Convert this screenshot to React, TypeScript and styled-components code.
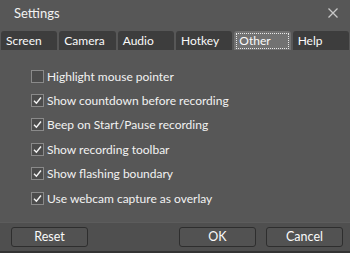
import styled, { createGlobalStyle, css } from 'styled-components';

const Global = createGlobalStyle`
  html, body { margin: 0; padding: 0; background: #575757; }
  body { font-family: Lato, "Open Sans", sans-serif; }
`;

const Window = styled.div`
  width: 350px;
  height: 253px;
  background: #575757;
  display: flex;
  flex-direction: column;
  color: #f2f2f2;
  overflow: hidden;
`;

const TitleBar = styled.div`
  height: 31px;
  display: flex;
  align-items: center;
  justify-content: space-between;
  padding: 0 11px 6px 14px;
  box-sizing: border-box;
  font-size: 13px;
`;

const Close = styled.span`
  display: flex;
  width: 12px;
  height: 12px;
  color: #c8c8c8;
`;

const TabStrip = styled.div`
  display: flex;
  gap: 2px;
  padding: 0 1px;
  height: 19px;
`;

const Tab = styled.div<{ $active?: boolean }>`
  flex: 1;
  position: relative;
  background: ${({ $active }) => ($active ? '#727272' : '#3d3d3d')};
  border-radius: 3px 3px 0 0;
  font-size: 12px;
  line-height: 19px;
  padding-left: 5px;
  color: #fafafa;
  ${({ $active }) =>
    $active &&
    css`
      &::after {
        content: '';
        position: absolute;
        inset: 2px 2px 1px 2px;
        border: 1px dotted #e8e8e8;
      }
    `}
`;

const Content = styled.div`
  flex: 1;
  padding: 14px 0 0 31px;
  display: flex;
  flex-direction: column;
`;

const Row = styled.label`
  height: 24.4px;
  display: flex;
  align-items: center;
  gap: 3px;
  font-size: 12px;
`;

const Box = styled.span`
  width: 11px;
  height: 11px;
  border: 1px solid #8a8a8a;
  background: #4c4c4c;
  display: flex;
  align-items: center;
  justify-content: center;
`;

const Footer = styled.div`
  height: 31px;
  background: #4f4f4f;
  border-top: 1px solid #5c5c5c;
  border-bottom: 2px solid #333;
  box-sizing: border-box;
  display: flex;
  align-items: center;
  padding: 0 7px 0 11px;
  gap: 10px;
`;

const Button = styled.div<{ $push?: boolean }>`
  width: 77px;
  height: 20px;
  box-sizing: border-box;
  border: 1px solid #2e2e2e;
  border-radius: 3px;
  background: #525252;
  font-size: 12.5px;
  text-align: center;
  line-height: 18px;
  color: #fafafa;
  margin-left: ${({ $push }) => ($push ? 'auto' : '0')};
`;

const tabs = ['Screen', 'Camera', 'Audio', 'Hotkey', 'Other', 'Help'];
const options: [string, boolean][] = [
  ['Highlight mouse pointer', false],
  ['Show countdown before recording', true],
  ['Beep on Start/Pause recording', true],
  ['Show recording toolbar', true],
  ['Show flashing boundary', true],
  ['Use webcam capture as overlay', true],
];

export default function App() {
  return (
    <Window>
      <Global />
      <TitleBar>
        <span>Settings</span>
        <Close>
          <svg width="12" height="12" viewBox="0 0 12 12">
            <path d="M1.5 1.5 L10.5 10.5 M10.5 1.5 L1.5 10.5" stroke="currentColor" strokeWidth="1.3" />
          </svg>
        </Close>
      </TitleBar>
      <TabStrip>
        {tabs.map((t) => (
          <Tab key={t} $active={t === 'Other'}>
            {t}
          </Tab>
        ))}
      </TabStrip>
      <Content>
        {options.map(([label, checked]) => (
          <Row key={label}>
            <Box>
              {checked && (
                <svg width="9" height="9" viewBox="0 0 9 9">
                  <path d="M1 4.8 L3.4 7.2 L8 1.5" stroke="#f4f4f4" strokeWidth="1.4" fill="none" />
                </svg>
              )}
            </Box>
            {label}
          </Row>
        ))}
      </Content>
      <Footer>
        <Button>Reset</Button>
        <Button $push>OK</Button>
        <Button>Cancel</Button>
      </Footer>
    </Window>
  );
}
